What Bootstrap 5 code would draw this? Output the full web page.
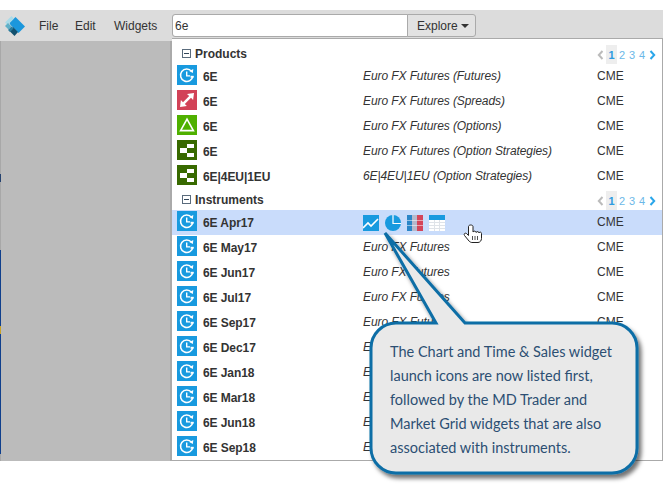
<!DOCTYPE html>
<html lang="en">
<head>
<meta charset="utf-8">
<title>Search</title>
<link href="https://cdn.jsdelivr.net/npm/bootstrap@5.3.0/dist/css/bootstrap.min.css" rel="stylesheet">
<style>
html,body{background:#fff;font-family:"Liberation Sans",Arial,sans-serif;font-size:12px;color:#333;overflow:hidden}
.app-frame{width:663px;height:451px;margin-top:10px;position:relative}
.top-bar{height:31px;background:#dcdcdc;padding-left:5px}
.logo-mark{width:20px;height:20px;margin-top:6px;flex:none}
.menu-items{margin-left:14px;width:133px;padding-top:9px;line-height:14px;color:#333}
.menu-file{width:36px}
.menu-edit{width:39px}
.search-box{margin-top:4px;width:304px;height:23px;flex-wrap:nowrap}
.search-box .form-control{font-size:12px;padding:0 2px;height:23px;min-height:0;border-color:#aaa;border-radius:3px 0 0 3px;color:#333;width:236px;flex:none;box-shadow:none}
.search-box .btn{font-size:12px;padding:0 0 0 9px;height:23px;line-height:22px;background:#e2e2e2;border:1px solid #aaa;color:#333;border-radius:0 3px 3px 0;width:69px;flex:none;white-space:nowrap;text-align:left}
.caret-mark{display:inline-block;border:4px solid transparent;border-top-color:#333;border-bottom:0;vertical-align:2px;margin-left:3px}
.work-area{height:420px}
.idle-side{height:420px;background:#bbb;border-right:2px solid #aaa}
.left-edge{width:1px;height:420px;background:#a8a8a8;flex:none}
.edge-dark{height:8px;margin-top:133px;background:#25426f}
.edge-blue{height:76px;margin-top:68px;background:#0f3f8c}
.edge-gold{height:8px;background:#c9a227}
.edge-blue-low{height:120px;background:#0f3f8c}
.result-panel{width:491px;height:423px;margin-top:-3px;background:#fff;border:1px solid #aaa;border-left:0}
.group-head{font-weight:700;padding-left:10px;position:relative;line-height:18px}
.head-one{height:25px;padding-top:6px}
.head-two{height:21px;padding-top:2px}
.minus-box{width:9px;height:9px;border:1px solid #5a6b7c;position:relative;margin-right:4px;flex:none;margin-top:4px}
.minus-box::after{content:"";position:absolute;left:1px;right:1px;top:3px;height:1px;background:#33475b}
.pager-box{position:absolute;left:425px;top:0;display:flex;align-items:flex-start;font-weight:400;color:#6bb8e8;font-size:11px}
.head-one .pager-box{top:6px}
.head-two .pager-box{top:2px}
.pager-box b{background:#eee;color:#2f9be0;width:11px;height:19px;text-align:center;line-height:20px;margin:0 2px 0 2px}
.pager-box i{font-style:normal;width:10px;line-height:20px;text-align:left}
.pager-box svg{margin-top:5px;flex:none}
.result-row{height:25px;display:flex;align-items:flex-start;padding-left:5px;line-height:24px}
.result-row.row-hot{background:#c9dcfb}
.tile{width:20px;height:20px;margin-top:1px;flex:none;display:block}
.sym-name{font-weight:700;margin-left:6px;width:160px;flex:none;letter-spacing:-.08px;padding-top:1px}
.sym-desc{font-style:italic;width:234px;flex:none;letter-spacing:-.09px}
.launch-icons{width:234px;flex:none;display:flex;gap:6px;padding-top:5px}
.launch-icons svg{display:block;width:16px;height:16px}
.over-art{position:absolute;left:0;top:0;pointer-events:none;z-index:3}
.note-text{position:absolute;left:390px;top:340px;width:240px;z-index:4;font-family:Lato,sans-serif;font-size:14.5px;line-height:24px;color:#2c4f73}
</style>
</head>
<body>
<svg width="0" height="0" class="position-absolute">
<defs>
<symbol id="t-clock" viewBox="0 0 20 20"><rect width="20" height="20" fill="#189adf"/><path d="M14.600 6.400A6.200 6.200 0 1 0 15.900 11" fill="none" stroke="#fff" stroke-width="1.500"/><path d="M12.400 6.600l4 .6-.9-3.800z" fill="#fff" transform="rotate(20 14 6)"/><path d="M9.700 6.500v4.400h3.400" fill="none" stroke="#fff" stroke-width="1.400"/><rect x="13.600" y="10.800" width="3" height="2" fill="#fff"/></symbol>
<symbol id="t-red" viewBox="0 0 20 20"><rect width="20" height="20" fill="#d24257"/><path d="M17 3l-7 .9 2.200 2.100-6.200 6.200-2.100-2.200L3 17l6.900-.9-2.100-2.200 6.200-6.100 2.100 2.100z" fill="#fff"/></symbol>
<symbol id="t-green" viewBox="0 0 20 20"><rect width="20" height="20" fill="#4fb000"/><path d="M10 4.200L16.400 15.600H3.600z" fill="none" stroke="#fff" stroke-width="1.600"/></symbol>
<symbol id="t-strat" viewBox="0 0 20 20"><rect width="20" height="20" fill="#386a00"/><rect x="3" y="8" width="7" height="5" fill="#fff"/><rect x="10" y="4" width="7" height="4" fill="#fff"/><rect x="10" y="13" width="7" height="4" fill="#fff"/></symbol>
</defs>
</svg>
<div class="app-frame">
<div class="top-bar d-flex">
<svg class="logo-mark" viewBox="0 0 20 20"><path d="M10.500 1l9.500 9.500-6.500 6.500-8-8-1-2z" fill="#1b97dc"/><path d="M6.500 0L0 6.500l2.500 2.500L9 2.500z" fill="#a9dbe9"/><path d="M0 10l3-3 3.500 3.500-3 3z" fill="#5fb0c8"/><path d="M8 11l5 5-3.500 4-5-5z" fill="#12506e"/><path d="M6.500 10.500l2 2-3.500 3.500-2-2z" fill="#2a7d9e"/></svg>
<div class="menu-items d-flex"><span class="menu-file">File</span><span class="menu-edit">Edit</span><span>Widgets</span></div>
<div class="input-group search-box">
<input class="form-control" type="text" value="6e" aria-label="Search">
<button class="btn" type="button">Explore<span class="caret-mark"></span></button>
</div>
</div>
<div class="work-area d-flex">
<div class="left-edge"><div class="edge-dark"></div><div class="edge-blue"></div><div class="edge-gold"></div><div class="edge-blue-low"></div></div>
<div class="idle-side flex-grow-1"></div>
<div class="result-panel">
<div class="group-head head-one d-flex"><span class="minus-box"></span>Products
<div class="pager-box"><svg width="7" height="10" viewBox="0 0 7 10"><path d="M5.500 1L1.800 5l3.700 4" fill="none" stroke="#bbb" stroke-width="2"/></svg><b>1</b><i>2</i><i>3</i><i>4</i><svg width="7" height="10" viewBox="0 0 7 10"><path d="M1.500 1l3.700 4-3.700 4" fill="none" stroke="#2aa6ea" stroke-width="2"/></svg></div></div>
<div class="result-row"><svg class="tile"><use href="#t-clock"/></svg><span class="sym-name">6E</span><span class="sym-desc">Euro FX Futures (Futures)</span><span>CME</span></div>
<div class="result-row"><svg class="tile"><use href="#t-red"/></svg><span class="sym-name">6E</span><span class="sym-desc">Euro FX Futures (Spreads)</span><span>CME</span></div>
<div class="result-row"><svg class="tile"><use href="#t-green"/></svg><span class="sym-name">6E</span><span class="sym-desc">Euro FX Futures (Options)</span><span>CME</span></div>
<div class="result-row"><svg class="tile"><use href="#t-strat"/></svg><span class="sym-name">6E</span><span class="sym-desc">Euro FX Futures (Option Strategies)</span><span>CME</span></div>
<div class="result-row"><svg class="tile"><use href="#t-strat"/></svg><span class="sym-name">6E|4EU|1EU</span><span class="sym-desc">6E|4EU|1EU (Option Strategies)</span><span>CME</span></div>
<div class="group-head head-two d-flex"><span class="minus-box"></span>Instruments
<div class="pager-box"><svg width="7" height="10" viewBox="0 0 7 10"><path d="M5.500 1L1.800 5l3.700 4" fill="none" stroke="#bbb" stroke-width="2"/></svg><b>1</b><i>2</i><i>3</i><i>4</i><svg width="7" height="10" viewBox="0 0 7 10"><path d="M1.500 1l3.700 4-3.700 4" fill="none" stroke="#2aa6ea" stroke-width="2"/></svg></div></div>
<div class="result-row row-hot"><svg class="tile"><use href="#t-clock"/></svg><span class="sym-name">6E Apr17</span>
<div class="launch-icons">
<svg viewBox="0 0 16 16"><rect width="16" height="16" fill="#189adf"/><path d="M0 13l5-5 3 3 7-7" fill="none" stroke="#fff" stroke-width="1.600"/></svg>
<svg viewBox="0 0 16 16"><circle cx="8" cy="8" r="8" fill="#189adf"/><path d="M8 0V8.500H16" fill="none" stroke="#fff" stroke-width="1.200"/></svg>
<svg viewBox="0 0 16 16"><rect width="6" height="16" fill="#2b86c8"/><rect x="5" width="6" height="16" fill="#b5b9cc"/><rect x="10" width="6" height="16" fill="#d4455a"/><path d="M0 5.500h16M0 10.500h16" stroke="#fff" stroke-opacity=".5" stroke-width="1"/></svg>
<svg viewBox="0 0 16 16"><rect width="16" height="16" fill="#fff"/><rect width="16" height="5" fill="#189adf"/><path d="M0 7.500h16M0 10.500h16M0 13.500h16M5.500 5v11M10.500 5v11" stroke="#dfe3e8" stroke-width="1"/></svg>
</div><span>CME</span></div>
<div class="result-row"><svg class="tile"><use href="#t-clock"/></svg><span class="sym-name">6E May17</span><span class="sym-desc">Euro FX Futures</span><span>CME</span></div>
<div class="result-row"><svg class="tile"><use href="#t-clock"/></svg><span class="sym-name">6E Jun17</span><span class="sym-desc">Euro FX Futures</span><span>CME</span></div>
<div class="result-row"><svg class="tile"><use href="#t-clock"/></svg><span class="sym-name">6E Jul17</span><span class="sym-desc">Euro FX Futures</span><span>CME</span></div>
<div class="result-row"><svg class="tile"><use href="#t-clock"/></svg><span class="sym-name">6E Sep17</span><span class="sym-desc">Euro FX Futures</span><span>CME</span></div>
<div class="result-row"><svg class="tile"><use href="#t-clock"/></svg><span class="sym-name">6E Dec17</span><span class="sym-desc">Euro FX Futures</span><span>CME</span></div>
<div class="result-row"><svg class="tile"><use href="#t-clock"/></svg><span class="sym-name">6E Jan18</span><span class="sym-desc">Euro FX Futures</span><span>CME</span></div>
<div class="result-row"><svg class="tile"><use href="#t-clock"/></svg><span class="sym-name">6E Mar18</span><span class="sym-desc">Euro FX Futures</span><span>CME</span></div>
<div class="result-row"><svg class="tile"><use href="#t-clock"/></svg><span class="sym-name">6E Jun18</span><span class="sym-desc">Euro FX Futures</span><span>CME</span></div>
<div class="result-row"><svg class="tile"><use href="#t-clock"/></svg><span class="sym-name">6E Sep18</span><span class="sym-desc">Euro FX Futures</span><span>CME</span></div>
</div>
</div>
</div>
<svg class="over-art" width="668" height="488" viewBox="0 0 668 488">
<defs><filter id="soft" x="-10%" y="-10%" width="125%" height="125%"><feDropShadow dx="3" dy="4" stdDeviation="2" flood-color="#000" flood-opacity=".55"/></filter></defs>
<path d="M468.500 226.500v9l-2-2c-1.500-1-3 .5-2 2l4.500 5.500c1 1 2 1.500 3 1.500h6c2 0 3.500-2 3.500-4v-5c0-1.500-2-2-2.500-.5 0-1.500-2-2-3-.5 0-1.500-2-2-3-.5v-5.500c0-2-4.500-2-4.500 0z" fill="#fff" stroke="#222" stroke-width="1"/>
<path d="M472.500 236v4M475 236v4M477.500 236v4" stroke="#222" stroke-width=".8"/>
<path d="M436 323L385 233L465 323H612a25 25 0 0 1 25 25V448a25 25 0 0 1-25 25H396a25 25 0 0 1-25-25V348a25 25 0 0 1 25-25z" fill="#e9e9e9" stroke="#0d6ea6" stroke-width="3" stroke-linejoin="miter" filter="url(#soft)"/>
</svg>
<div class="note-text">The Chart and Time &amp; Sales widget<br>launch icons are now listed first,<br>followed by the MD Trader and<br>Market Grid widgets that are also<br>associated with instruments.</div>
<script src="https://cdn.jsdelivr.net/npm/bootstrap@5.3.0/dist/js/bootstrap.bundle.min.js"></script>
</body>
</html>
